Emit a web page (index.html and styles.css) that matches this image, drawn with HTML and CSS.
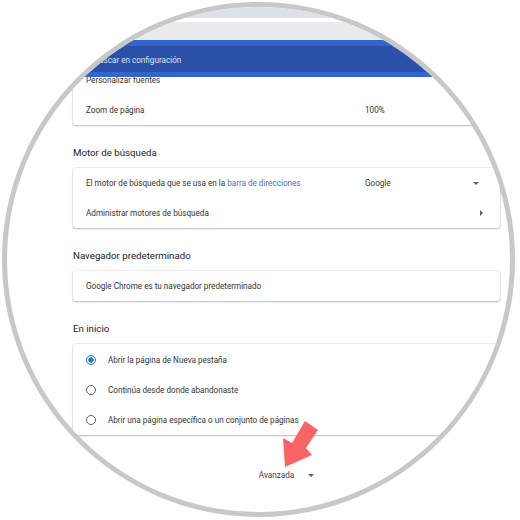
FILE: index.html
```html
<!DOCTYPE html>
<html lang="es">
<head>
    <meta charset="UTF-8">
    <meta name="viewport" content="width=device-width, initial-scale=1.0">
    <title>Configuración</title>
    <link rel="stylesheet" href="styles.css">
</head>
<body>
    <div class="lens">
        <div class="toolbar">
            <div class="tabstrip"></div>
            <div class="omnibox-bar"></div>
            <div class="search-bar">
                <span class="search-label">Buscar en configuración</span>
            </div>
        </div>

        <main class="settings">
            <div class="card card-first">
                <div class="row"><span class="label">Personalizar fuentes</span></div>
                <div class="row">
                    <span class="label">Zoom de página</span>
                    <span class="value">100%</span>
                </div>
            </div>

            <h2 class="section-title">Motor de búsqueda</h2>
            <div class="card">
                <div class="row">
                    <span class="label">El motor de búsqueda que se usa en la <a href="#" class="link">barra de direcciones</a></span>
                    <span class="value">Google</span>
                    <span class="icon caret-down"></span>
                </div>
                <div class="row">
                    <span class="label">Administrar motores de búsqueda</span>
                    <span class="value"></span>
                    <span class="icon caret-right"></span>
                </div>
            </div>

            <h2 class="section-title">Navegador predeterminado</h2>
            <div class="card">
                <div class="row"><span class="label">Google Chrome es tu navegador predeterminado</span></div>
            </div>

            <h2 class="section-title">En inicio</h2>
            <div class="card radio-list">
                <div class="row radio-row">
                    <span class="radio checked"></span>
                    <span>Abrir la página de Nueva pestaña</span>
                </div>
                <div class="row radio-row">
                    <span class="radio"></span>
                    <span>Continúa desde donde abandonaste</span>
                </div>
                <div class="row radio-row">
                    <span class="radio"></span>
                    <span>Abrir una página específica o un conjunto de páginas</span>
                </div>
            </div>

            <div class="advanced">
                <span>Avanzada</span>
                <span class="caret-down small"></span>
            </div>
        </main>
    </div>

    <!-- red pointer drawn over the screenshot -->
    <svg class="pointer" width="520" height="520" viewBox="0 0 520 520">
        <polygon points="305,421 318,430 306,448 312,455 285,467 283,438 292,443" fill="#f96464"/>
    </svg>
</body>
</html>
```

FILE: styles.css
```css
* {
    margin: 0;
    padding: 0;
    box-sizing: border-box;
}

body {
    background-color: #fff;
    font-family: Roboto, "Liberation Sans", sans-serif;
    font-size: 8.15px;
    color: #333;
}

.lens {
    position: relative;
    width: 513px;
    height: 515px;
    margin: 2px 0 0 2px;
    border: 5px solid #c8c8c8;
    border-radius: 50%;
    overflow: hidden;
    background-color: #fff;
}

.toolbar {
    position: relative;
    z-index: 2;
}

.tabstrip {
    height: 11px;
    background-color: #dee1e5;
}

.omnibox-bar {
    height: 18px;
    margin-top: 4px;
    background-color: #e9ebed;
}

.search-bar {
    height: 37px;
    display: flex;
    align-items: center;
    padding: 1px 0 0 87px;
    background-color: #2a51a7;
    border-top: 6px solid #3265c9;
    border-bottom: 5px solid #3366cc;
}

.search-label {
    color: #dbe3f3;
}

.settings {
    margin-top: -12px;
    padding-left: 66px;
    width: 493px;
}

.card {
    background-color: #fff;
    border-radius: 3px;
    box-shadow: 0 1px 2px rgba(60, 64, 67, 0.3), 0 0 0 1px rgba(60, 64, 67, 0.08);
    padding: 0 16px 0 13px;
}

.row {
    display: flex;
    align-items: center;
    height: 30px;
}

.label {
    width: 279px;
}

.value {
    flex: 1;
}

.link {
    color: #3d6fd3;
    text-decoration: none;
}

.icon {
    width: 10px;
    display: flex;
    justify-content: center;
}

.caret-down {
    width: 0;
    height: 0;
    border-left: 3.5px solid transparent;
    border-right: 3.5px solid transparent;
    border-top: 3.5px solid #5f6368;
}

.icon.caret-down {
    width: 0;
    margin-right: 5px;
}

.caret-right {
    width: 0;
    height: 0;
    border-top: 3px solid transparent;
    border-bottom: 3px solid transparent;
    border-left: 3px solid #5f6368;
}

.icon.caret-right {
    width: 0;
    margin-right: 1px;
}

.section-title {
    font-size: 9.7px;
    font-weight: normal;
    color: #202124;
    line-height: 14px;
    margin: 21px 0 8px;
}

.radio-list {
    padding-top: 1px;
}

.radio-row {
    gap: 12px;
}

.radio {
    width: 10px;
    height: 10px;
    border: 1.5px solid #5f6368;
    border-radius: 50%;
    flex-shrink: 0;
}

.radio.checked {
    border-color: #1a73e8;
    background: radial-gradient(circle, #1a73e8 2.4px, #fff 2.9px);
}

.advanced {
    display: flex;
    align-items: center;
    justify-content: center;
    gap: 14px;
    margin-top: 33px;
    line-height: 14px;
    color: #3c4043;
}

.caret-down.small {
    border-left-width: 3px;
    border-right-width: 3px;
    border-top-width: 3px;
}

.pointer {
    position: absolute;
    top: 0;
    left: 0;
}
```
